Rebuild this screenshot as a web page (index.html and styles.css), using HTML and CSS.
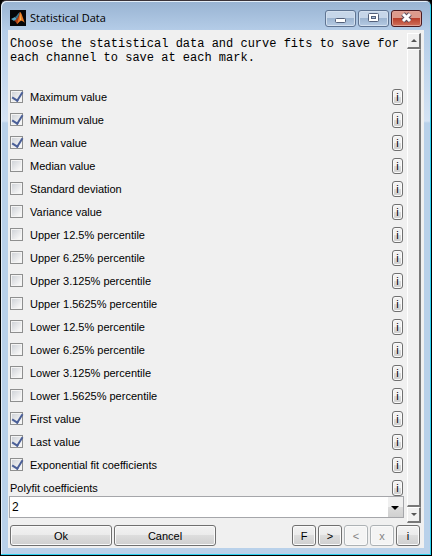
FILE: index.html
```html
<!DOCTYPE html>
<html lang="en">
<head>
    <meta charset="UTF-8">
    <meta name="viewport" content="width=device-width, initial-scale=1.0">
    <title>Statistical Data</title>
    <link rel="stylesheet" href="styles.css">
</head>
<body>
    <div class="window">
        <header class="titlebar">
            <svg class="logo" viewBox="0 0 16 16" aria-hidden="true">
                <rect width="16" height="16" fill="#050608"/>
                <path d="M1 9 L5 7 L7 9 L4 11 Z" fill="#58a5c4"/>
                <path d="M5 7 C7 6 8 3 10 2 L8 8 L6 11 L4 11 L7 9 Z" fill="#3f7488"/>
                <path d="M10 2 C9 5 8 9 4 11 C6 11 6 13 7 14 C9 13 9 10 11 10 Z" fill="#a83a16"/>
                <path d="M10 2 C9 6 9 9 7 14 C9 13 10 10 12 11 C13 11 14 12 15 13 C13 9 12 3 10 2 Z" fill="#e87a25"/>
                <path d="M10 3 L10 10 L11 10 Z" fill="#f7c768"/>
            </svg>
            <h1>Statistical Data</h1>
            <div class="controls">
                <button type="button" class="control" aria-label="Minimize">
                    <svg viewBox="0 0 16 12"><rect x="2.5" y="6.5" width="10" height="4" rx="1" fill="#fff" stroke="#53607a"/></svg>
                </button>
                <button type="button" class="control" aria-label="Maximize">
                    <svg viewBox="0 0 16 12"><rect x="2.5" y="1.5" width="10" height="8" rx="1" fill="#fff" stroke="#53607a"/><rect x="5.5" y="4.5" width="4" height="2" fill="#a9bfda" stroke="#53607a"/></svg>
                </button>
                <button type="button" class="control close" aria-label="Close">
                    <svg viewBox="0 0 16 12"><path d="M4 2 L11 9 M11 2 L4 9" stroke="#5a4b5b" stroke-width="5"/><path d="M4 2 L11 9 M11 2 L4 9" stroke="#fff" stroke-width="3"/></svg>
                </button>
            </div>
        </header>

        <form class="client">
            <div class="content">
                <div class="settings">
                    <p class="intro">Choose the statistical data and curve fits to save for each channel to save at each mark.</p>

                    <div class="row"><label><input type="checkbox" checked>Maximum value</label><button type="button" class="info">i</button></div>
                    <div class="row"><label><input type="checkbox" checked>Minimum value</label><button type="button" class="info">i</button></div>
                    <div class="row"><label><input type="checkbox" checked>Mean value</label><button type="button" class="info">i</button></div>
                    <div class="row"><label><input type="checkbox">Median value</label><button type="button" class="info">i</button></div>
                    <div class="row"><label><input type="checkbox">Standard deviation</label><button type="button" class="info">i</button></div>
                    <div class="row"><label><input type="checkbox">Variance value</label><button type="button" class="info">i</button></div>
                    <div class="row"><label><input type="checkbox">Upper 12.5% percentile</label><button type="button" class="info">i</button></div>
                    <div class="row"><label><input type="checkbox">Upper 6.25% percentile</label><button type="button" class="info">i</button></div>
                    <div class="row"><label><input type="checkbox">Upper 3.125% percentile</label><button type="button" class="info">i</button></div>
                    <div class="row"><label><input type="checkbox">Upper 1.5625% percentile</label><button type="button" class="info">i</button></div>
                    <div class="row"><label><input type="checkbox">Lower 12.5% percentile</label><button type="button" class="info">i</button></div>
                    <div class="row"><label><input type="checkbox">Lower 6.25% percentile</label><button type="button" class="info">i</button></div>
                    <div class="row"><label><input type="checkbox">Lower 3.125% percentile</label><button type="button" class="info">i</button></div>
                    <div class="row"><label><input type="checkbox">Lower 1.5625% percentile</label><button type="button" class="info">i</button></div>
                    <div class="row"><label><input type="checkbox" checked>First value</label><button type="button" class="info">i</button></div>
                    <div class="row"><label><input type="checkbox" checked>Last value</label><button type="button" class="info">i</button></div>
                    <div class="row"><label><input type="checkbox" checked>Exponential fit coefficients</label><button type="button" class="info">i</button></div>
                    <div class="row"><label for="polyfit">Polyfit coefficients</label><button type="button" class="info">i</button></div>

                    <div class="combo">
                        <select id="polyfit">
                            <option>1</option>
                            <option selected>2</option>
                            <option>3</option>
                        </select>
                    </div>
                </div>

                <div class="scrollbar">
                    <button type="button" class="arrow" aria-label="Scroll up">
                        <svg viewBox="0 0 6 3"><path d="M0 3 L3 0 L6 3 Z" fill="#555"/></svg>
                    </button>
                    <div class="thumb"></div>
                    <button type="button" class="arrow" aria-label="Scroll down">
                        <svg viewBox="0 0 6 3"><path d="M0 0 L3 3 L6 0 Z" fill="#555"/></svg>
                    </button>
                </div>
            </div>

            <footer class="actions">
                <button type="button" class="btn wide">Ok</button>
                <button type="button" class="btn wide">Cancel</button>
                <div class="tools">
                    <button type="button" class="btn">F</button>
                    <button type="button" class="btn">&gt;</button>
                    <button type="button" class="btn" disabled>&lt;</button>
                    <button type="button" class="btn" disabled>x</button>
                    <button type="button" class="btn">i</button>
                </div>
            </footer>
        </form>
    </div>
</body>
</html>
```
FILE: styles.css
```css
* {
    box-sizing: border-box;
}

body {
    margin: 0;
    background: #000;
    color: #000;
    font-family: "Liberation Sans", Arial, sans-serif;
    font-size: 11px;
}

button {
    padding: 0;
    font: inherit;
    color: inherit;
}

.window {
    display: flex;
    flex-direction: column;
    min-height: 100vh;
    padding: 0 7px 7px;
    border: 1px solid #000;
    border-top-color: #3a3339;
    border-radius: 6px 6px 0 0;
    background: linear-gradient(to bottom, #98b3d2, #b5cde8 30px, #d5e3f4 120px, #b9d1ea 122px);
    box-shadow: inset -1px -1px #2bd0ee, inset 1px 1px #e4eef8;
}

/* Title bar */
.titlebar {
    display: flex;
    align-items: center;
    height: 29px;
    padding: 5px 2px 0;
}

.logo {
    width: 16px;
    height: 16px;
}

.titlebar h1 {
    flex: 1;
    margin: 0 0 0 4px;
    font-family: "Open Sans", "Noto Sans", sans-serif;
    font-size: 11px;
    font-weight: normal;
    line-height: 16px;
}

.controls {
    display: flex;
    gap: 2px;
}

.control {
    display: flex;
    align-items: center;
    justify-content: center;
    width: 31px;
    height: 17px;
    border: 1px solid #5f7492;
    border-radius: 3px;
    background: linear-gradient(to bottom, #c6d6e9 45%, #9db5d1 50%, #b5cae3);
    box-shadow: inset 0 0 0 1px #d3e0ef;
}

.control svg {
    width: 16px;
    height: 12px;
}

.close {
    border-color: #4b1a20;
    background: linear-gradient(to bottom, #dc9a8c 45%, #b93f2b 50%, #d0705c);
    box-shadow: inset 0 0 0 1px #dfa195;
}

/* Client area */
.client {
    display: flex;
    flex: 1;
    flex-direction: column;
    background: #f0f0f0;
}

.content {
    display: flex;
    flex: 1;
    gap: 3px;
    padding: 3px 3px 1px 1px;
}

.settings {
    flex: 1;
    min-width: 0;
}

.intro {
    height: 52px;
    margin: 0;
    padding: 4px 0 0 1px;
    font-family: "Liberation Mono", "Courier New", monospace;
    font-size: 12px;
    line-height: 14px;
}

.row {
    display: flex;
    align-items: center;
    justify-content: space-between;
    height: 23px;
    padding: 0 1px;
}

.row label {
    display: flex;
    align-items: center;
    gap: 7px;
}

.row input {
    appearance: none;
    width: 13px;
    height: 13px;
    margin: 0;
    border: 1px solid #8e8f8f;
    background: linear-gradient(135deg, #cbcfd5, #f6f6f6 80%);
    box-shadow: inset 0 0 0 1px #f4f4f4;
}

.row input:checked::before {
    content: "";
    display: block;
    width: 5px;
    height: 9px;
    margin: -1px 0 0 3px;
    border: solid #4a5f97;
    border-width: 0 2px 2px 0;
    transform: rotate(32deg);
}

.info {
    width: 11px;
    height: 16px;
    border: 1px solid #707070;
    border-radius: 3px;
    background: linear-gradient(to bottom, #f2f2f2 50%, #dcdcdc 50%, #cfcfcf);
    box-shadow: inset 0 0 0 1px #fafafa;
    line-height: 14px;
}

.combo {
    position: relative;
    margin-top: -3px;
}

.combo select {
    display: block;
    appearance: none;
    width: 100%;
    height: 22px;
    padding: 0 20px 0 2px;
    border: 1px solid #a5a6aa;
    border-radius: 0;
    background: #fff;
    color: #000;
    font: 12px "Liberation Sans", Arial, sans-serif;
}

/* drop-down arrow drawn over the right end of the select */
.combo::before {
    content: "";
    position: absolute;
    top: 1px;
    right: 1px;
    width: 15px;
    height: 20px;
    background: linear-gradient(to bottom, #f0f0f0 50%, #dcdcdc 50%, #d0d0d0);
    pointer-events: none;
}

.combo::after {
    content: "";
    position: absolute;
    top: 10px;
    right: 5px;
    border: solid transparent;
    border-width: 4px 4px 0;
    border-top-color: #000;
    pointer-events: none;
}

/* Scrollbar */
.scrollbar {
    display: flex;
    flex-direction: column;
    width: 14px;
}

.arrow {
    display: flex;
    align-items: center;
    justify-content: center;
    height: 16px;
    border: 1px solid #fff;
    border-right: 2px solid #777;
    border-bottom: 2px solid #777;
    background: #f0f0f0;
}

.arrow svg {
    width: 6px;
    height: 3px;
}

.thumb {
    flex: 1;
    border: 1px solid #fff;
    border-right: 2px solid #777;
    border-bottom: 2px solid #777;
}

/* Bottom buttons */
.actions {
    display: flex;
    gap: 2px;
    padding: 1px 4px 2px 2px;
}

.tools {
    display: flex;
    gap: 2px;
    margin-left: auto;
}

.btn {
    width: 24px;
    height: 21px;
    border: 1px solid #707070;
    border-radius: 3px;
    background: linear-gradient(to bottom, #f2f2f2, #ebebeb 50%, #dddddd 50%, #cfcfcf);
    box-shadow: inset 0 0 0 1px #fafafa;
}

.btn.wide {
    width: 102px;
}

.btn:disabled {
    border-color: #adb2b5;
    background: #f4f4f4;
    color: #838383;
}
```
